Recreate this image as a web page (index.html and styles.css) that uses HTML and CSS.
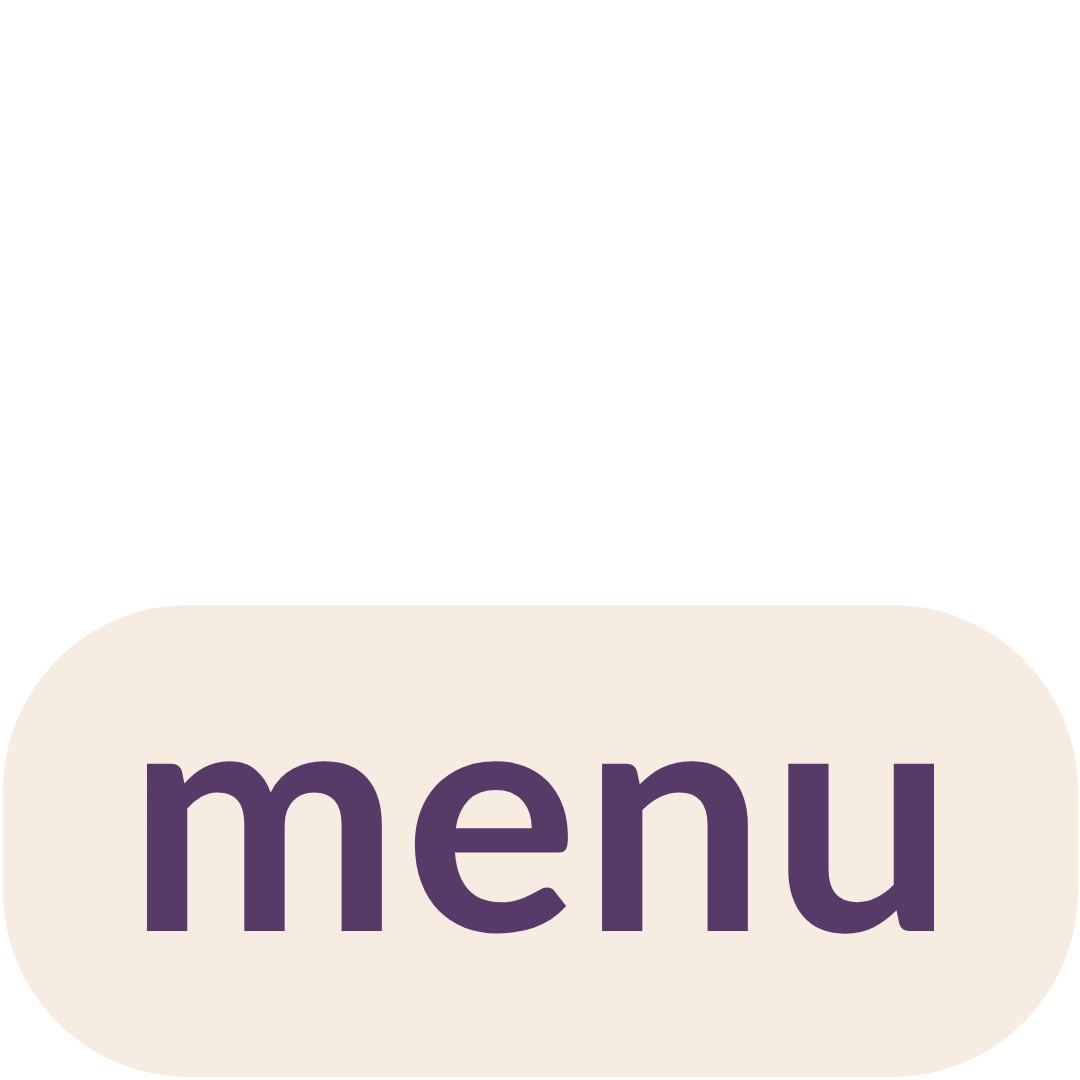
FILE: index.html
```html
<!DOCTYPE html>
<html>
<head>
<meta charset="utf-8">
<link rel="stylesheet" href="styles.css">
</head>
<body>
<div class="stage">
  <div class="pill">
    <span class="label">menu</span>
  </div>
</div>
</body>
</html>
```
FILE: styles.css
```css
html, body {
  margin: 0;
  padding: 0;
  background: #ffffff;
}
.stage {
  width: 1080px;
  height: 1080px;
  box-sizing: border-box;
  padding: 605px 2px 3px 3px;
  display: flex;
}
.pill {
  flex: 1;
  background: #f7ece1;
  border-radius: 186px;
  display: flex;
  align-items: center;
  justify-content: center;
}
.label {
  font-family: "Lato", "Liberation Sans", sans-serif;
  font-weight: 700;
  font-size: 326px;
  line-height: 1;
  color: #573a68;
  letter-spacing: 4px;
  padding: 0 0 72px 4px;
}
```
